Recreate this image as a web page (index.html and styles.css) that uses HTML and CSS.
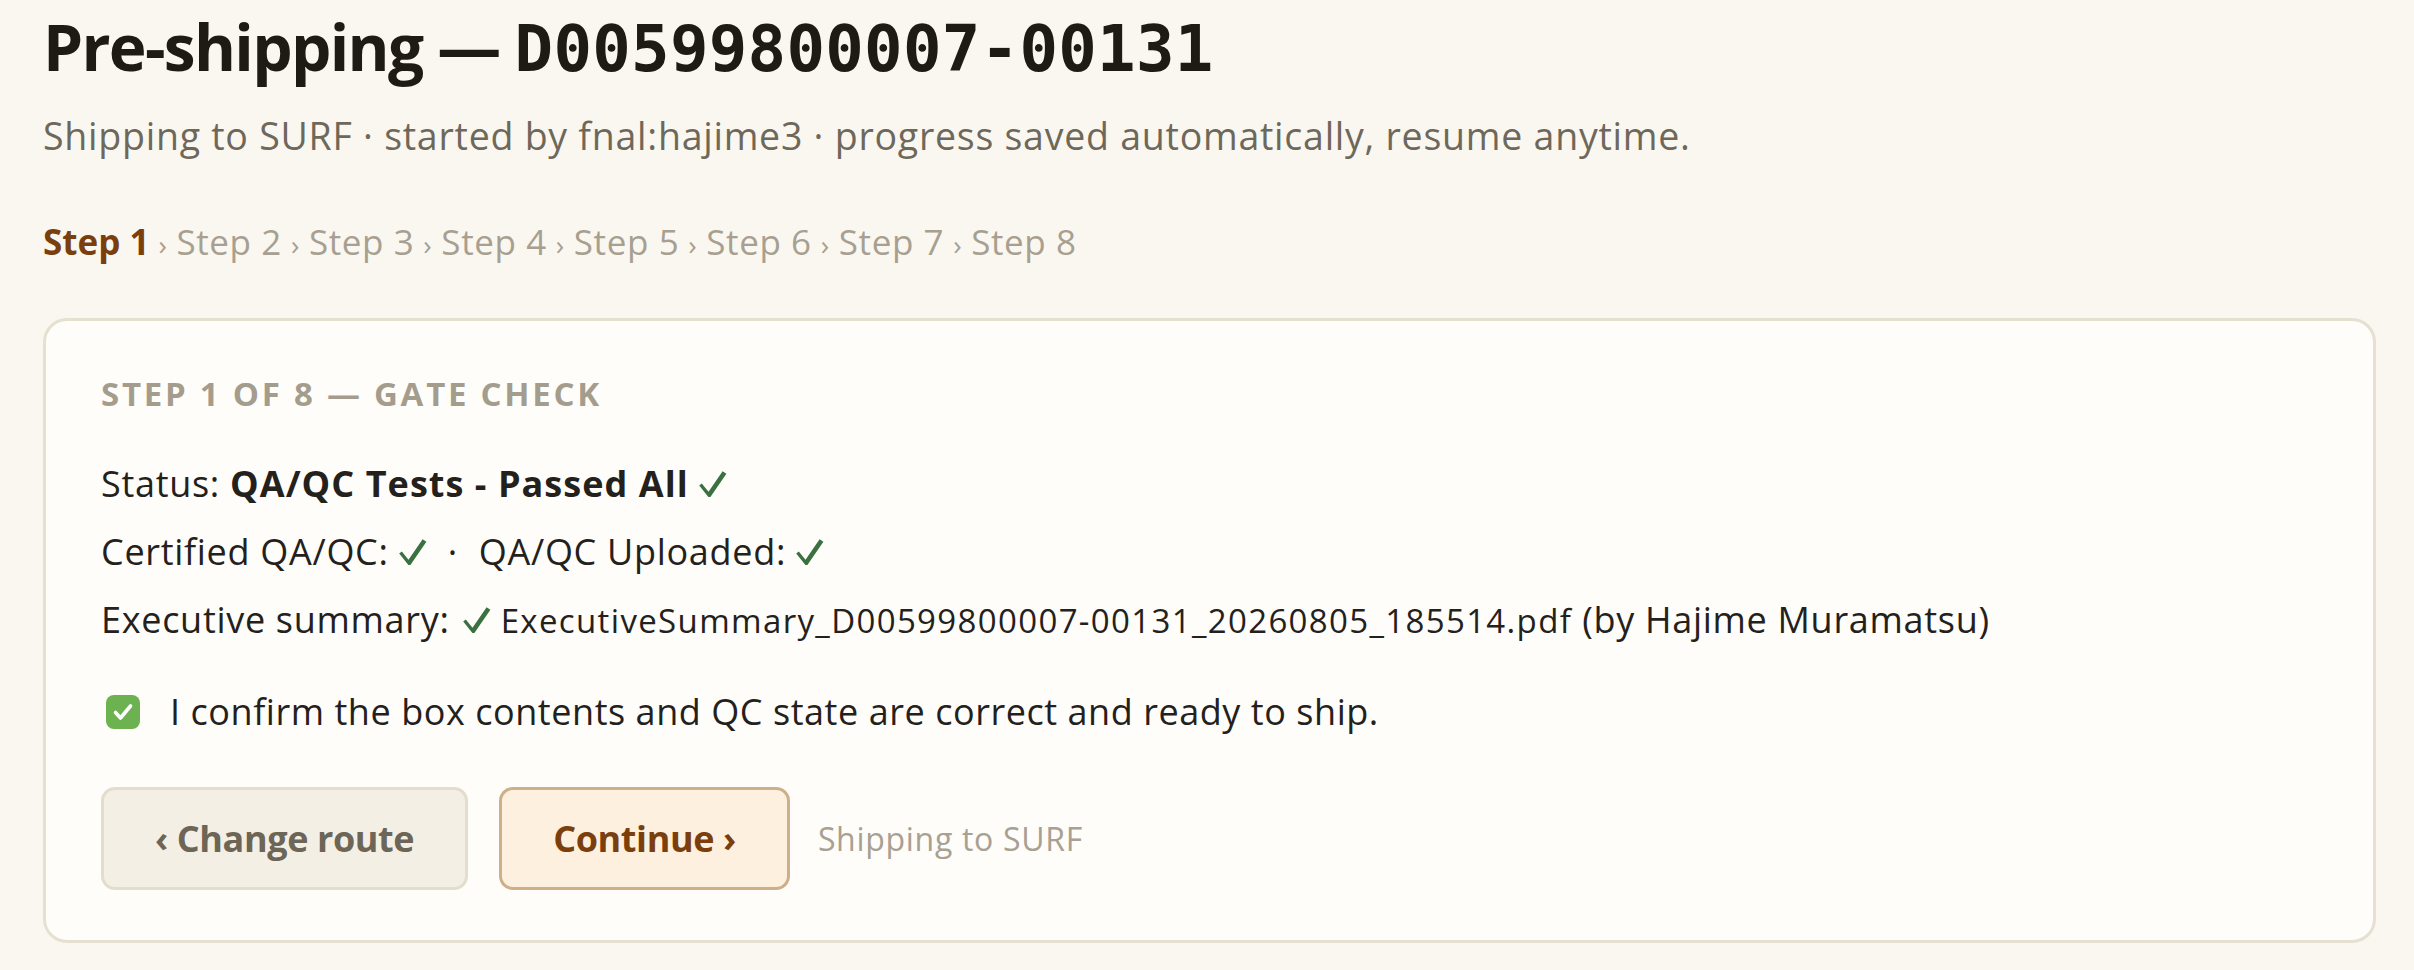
FILE: index.html
```html
<!DOCTYPE html>
<html lang="en">
<head>
<meta charset="utf-8">
<title>Pre-shipping — D00599800007-00131</title>
<link rel="stylesheet" href="styles.css">
</head>
<body>
<main class="page">
  <h1 class="title">Pre-shipping — <span class="mono">D00599800007-00131</span></h1>
  <p class="subtitle">Shipping to SURF · started by fnal:hajime3 · progress saved automatically, resume anytime.</p>
  <nav class="steps">
    <span class="step current">Step 1</span><span class="sep">›</span><span class="step">Step 2</span><span class="sep">›</span><span class="step">Step 3</span><span class="sep">›</span><span class="step">Step 4</span><span class="sep">›</span><span class="step">Step 5</span><span class="sep">›</span><span class="step">Step 6</span><span class="sep">›</span><span class="step">Step 7</span><span class="sep">›</span><span class="step">Step 8</span>
  </nav>
  <section class="card">
    <h2 class="card-label">Step 1 of 8 — Gate check</h2>
    <p class="line line-first">Status: <strong>QA/QC Tests - Passed All</strong> <svg class="ok" viewBox="0 0 28 26" width="28" height="26" aria-label="✓"><polygon points="0.2,14.6 2.8,12.4 9.5,20.7 23.6,0.2 27.4,2.8 11.4,26 9.4,26"/></svg></p>
    <p class="line">Certified QA/QC: <svg class="ok" viewBox="0 0 28 26" width="28" height="26" aria-label="✓"><polygon points="0.2,14.6 2.8,12.4 9.5,20.7 23.6,0.2 27.4,2.8 11.4,26 9.4,26"/></svg><span class="dot">·</span>QA/QC Uploaded: <svg class="ok" viewBox="0 0 28 26" width="28" height="26" aria-label="✓"><polygon points="0.2,14.6 2.8,12.4 9.5,20.7 23.6,0.2 27.4,2.8 11.4,26 9.4,26"/></svg></p>
    <p class="line">Executive summary: <svg class="ok ok-exec" viewBox="0 0 28 26" width="28" height="26" aria-label="✓"><polygon points="0.2,14.6 2.8,12.4 9.5,20.7 23.6,0.2 27.4,2.8 11.4,26 9.4,26"/></svg> <span class="file">ExecutiveSummary_D00599800007-00131_20260805_185514.pdf</span> (by Hajime Muramatsu)</p>
    <label class="confirm">
      <span class="box"><svg viewBox="0 0 34 34" width="34" height="34"><rect x="0" y="0" width="34" height="34" rx="8" fill="#6cb250"/><path d="M9.5 17.5 L14.5 23 L24.5 11" fill="none" stroke="#ffffff" stroke-width="3.6" stroke-linecap="round" stroke-linejoin="round"/></svg></span>
      <span class="confirm-text">I confirm the box contents and QC state are correct and ready to ship.</span>
    </label>
    <div class="actions">
      <button class="btn btn-back">‹ Change route</button>
      <button class="btn btn-next">Continue ›</button>
      <span class="hint">Shipping to SURF</span>
    </div>
  </section>
</main>
</body>
</html>
```
FILE: styles.css
```css
html, body {
  margin: 0;
  padding: 0;
  background: #faf7f0;
}
body {
  font-family: "Open Sans", "Noto Sans", sans-serif;
  color: #24211c;
}
.page {
  padding: 9px 38px 0 43px;
}
.title {
  margin: 0;
  font-size: 64px;
  line-height: 76px;
  font-weight: 700;
  color: #1e1a14;
  letter-spacing: -1.7px;
}
.mono {
  font-family: "DejaVu Sans Mono", "Liberation Mono", monospace;
  font-weight: 700;
  letter-spacing: 0.3px;
}
.subtitle {
  margin: 26px 0 0;
  font-size: 37.5px;
  line-height: 46px;
  letter-spacing: 0.75px;
  color: #6e685b;
}
.steps {
  margin-top: 61px;
  font-size: 35px;
  line-height: 44px;
  letter-spacing: 0.6px;
  color: #a7a091;
}
.step.current {
  color: #7b3f0e;
  font-weight: 700;
  letter-spacing: 0;
}
.sep {
  font-size: 28px;
  margin: 0 9px;
}
.card {
  margin-top: 52px;
  background: #fefdf9;
  border: 3px solid #e6e0d1;
  border-radius: 24px;
  padding: 53px 55px 50px;
}
.card-label {
  margin: 0;
  font-size: 33px;
  line-height: 40px;
  font-weight: 700;
  letter-spacing: 2.75px;
  text-transform: uppercase;
  color: #a49d8d;
}
.line {
  margin: 24px 0 0;
  font-size: 36px;
  line-height: 44px;
  letter-spacing: 0.7px;
}
.line-first {
  margin-top: 48px;
}
.line strong {
  font-weight: 700;
  letter-spacing: 1.05px;
}
.ok {
  fill: #3b7140;
  vertical-align: baseline;
}
.ok-exec {
  margin-left: 3px;
}
.dot {
  margin: 0 21px;
}
.file {
  font-size: 33px;
  letter-spacing: 1.35px;
}
.confirm {
  display: flex;
  align-items: center;
  gap: 30px;
  margin-top: 47px;
  font-size: 36px;
  line-height: 44px;
  letter-spacing: 0.55px;
}
.box {
  display: flex;
  margin-left: 5px;
}
.actions {
  display: flex;
  align-items: center;
  gap: 31px;
  margin-top: 53px;
}
.btn {
  font-family: inherit;
  font-size: 36px;
  line-height: 44px;
  font-weight: 700;
  padding: 27px 51px 26px;
  border-radius: 14px;
  border: 3px solid;
  cursor: pointer;
  letter-spacing: -0.4px;
}
.btn-back {
  background: #f3efe5;
  border-color: #e3ddce;
  color: #6d6556;
}
.btn-next {
  background: #fdf0df;
  border-color: #cdb08a;
  color: #7b3f0e;
}
.hint {
  margin-left: -3px;
  font-size: 32px;
  letter-spacing: 0.7px;
  color: #a8a092;
}
```
